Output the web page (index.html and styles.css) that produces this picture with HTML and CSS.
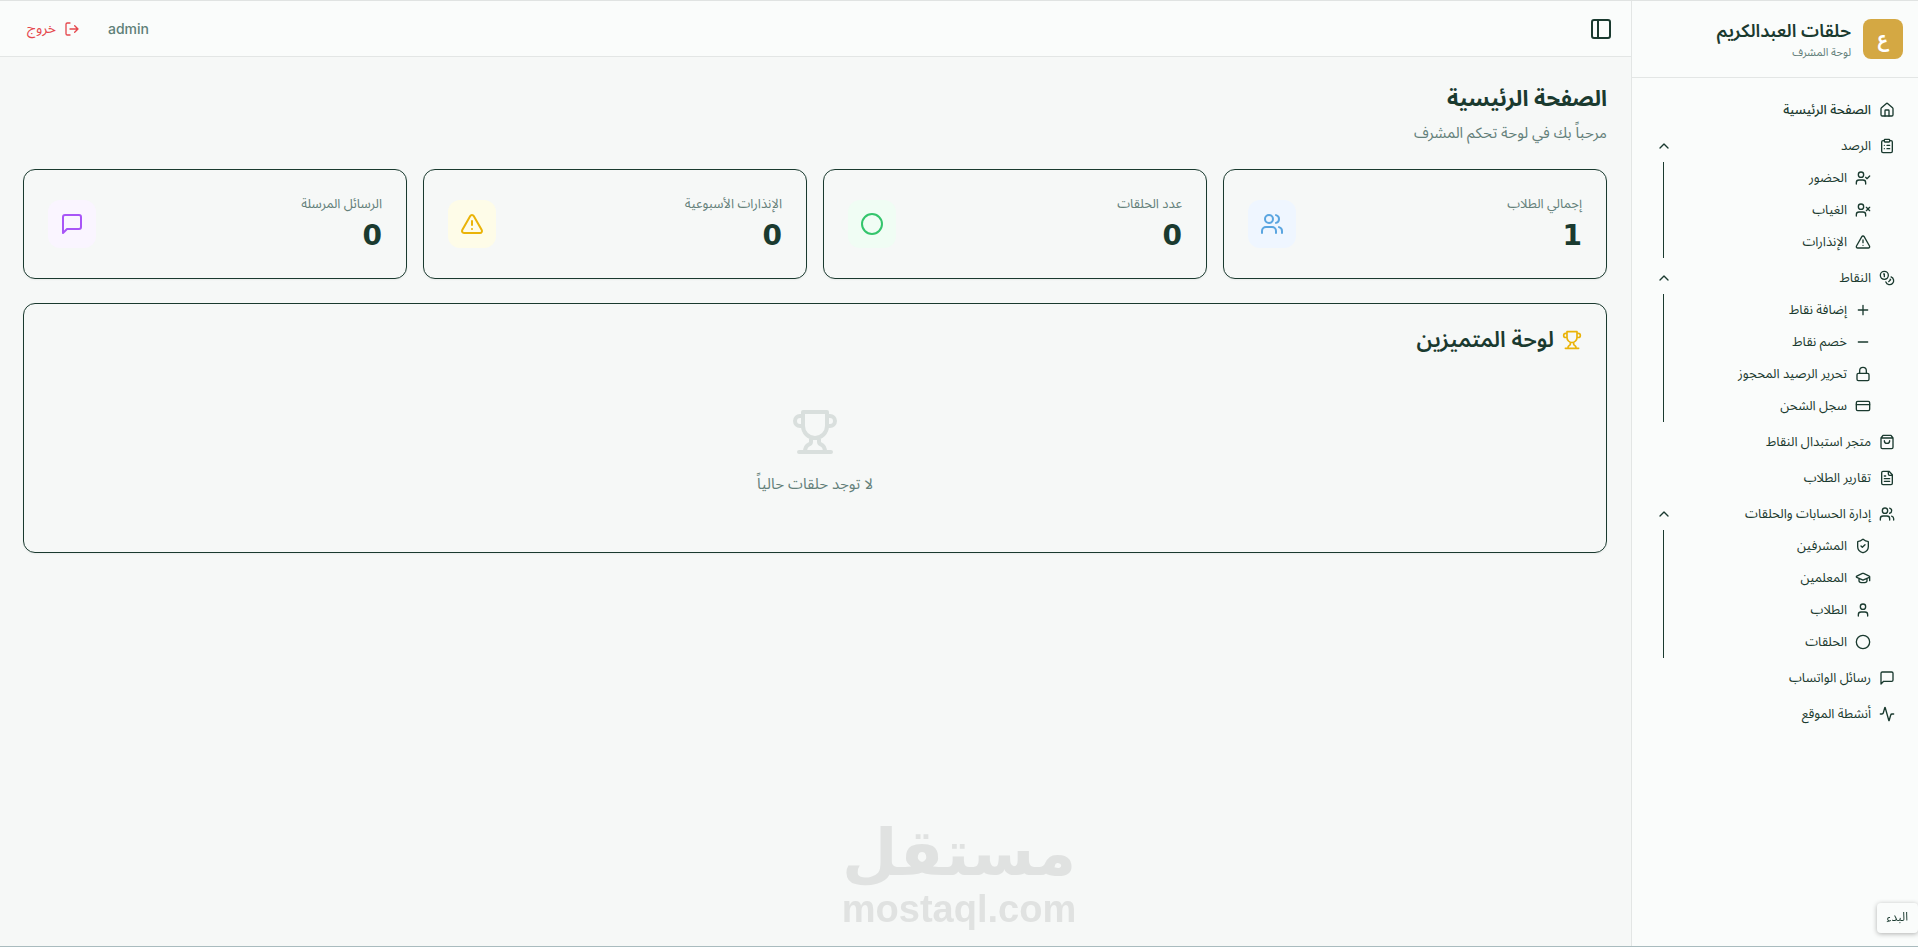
FILE: index.html
```html
<!DOCTYPE html>
<html lang="ar" dir="rtl">
<head>
    <meta charset="UTF-8">
    <meta name="viewport" content="width=device-width, initial-scale=1.0">
    <title>حلقات العبدالكريم</title>
    <link rel="stylesheet" href="styles.css">
</head>
<body>
    <!-- Иконки -->
    <svg class="sprite" aria-hidden="true">
        <symbol id="home" viewBox="0 0 24 24"><path d="M15 21v-8a1 1 0 0 0-1-1h-4a1 1 0 0 0-1 1v8"/><path d="M3 10a2 2 0 0 1 .709-1.528l7-5.999a2 2 0 0 1 2.582 0l7 5.999A2 2 0 0 1 21 10v9a2 2 0 0 1-2 2H5a2 2 0 0 1-2-2z"/></symbol>
        <symbol id="clipboard" viewBox="0 0 24 24"><rect width="8" height="4" x="8" y="2" rx="1"/><path d="M16 4h2a2 2 0 0 1 2 2v14a2 2 0 0 1-2 2H6a2 2 0 0 1-2-2V6a2 2 0 0 1 2-2h2M12 11h4M12 16h4M8 11h.01M8 16h.01"/></symbol>
        <symbol id="user-check" viewBox="0 0 24 24"><path d="m16 11 2 2 4-4M16 21v-2a4 4 0 0 0-4-4H6a4 4 0 0 0-4 4v2"/><circle cx="9" cy="7" r="4"/></symbol>
        <symbol id="user-x" viewBox="0 0 24 24"><path d="M16 21v-2a4 4 0 0 0-4-4H6a4 4 0 0 0-4 4v2M17 8l5 5M22 8l-5 5"/><circle cx="9" cy="7" r="4"/></symbol>
        <symbol id="alert" viewBox="0 0 24 24"><path d="m21.73 18-8-14a2 2 0 0 0-3.48 0l-8 14A2 2 0 0 0 4 21h16a2 2 0 0 0 1.73-3M12 9v4M12 17h.01"/></symbol>
        <symbol id="coins" viewBox="0 0 24 24"><circle cx="8" cy="8" r="6"/><path d="M18.09 10.37A6 6 0 1 1 10.34 18M7 6h1v4M16.71 13.88l.7.71-2.82 2.82"/></symbol>
        <symbol id="plus" viewBox="0 0 24 24"><path d="M5 12h14M12 5v14"/></symbol>
        <symbol id="minus" viewBox="0 0 24 24"><path d="M5 12h14"/></symbol>
        <symbol id="lock" viewBox="0 0 24 24"><rect width="18" height="11" x="3" y="11" rx="2"/><path d="M7 11V7a5 5 0 0 1 10 0v4"/></symbol>
        <symbol id="card" viewBox="0 0 24 24"><rect width="20" height="14" x="2" y="5" rx="2"/><path d="M2 10h20"/></symbol>
        <symbol id="bag" viewBox="0 0 24 24"><path d="M3 6 6 2h12l3 4v14a2 2 0 0 1-2 2H5a2 2 0 0 1-2-2zM3 6h18M16 10a4 4 0 0 1-8 0"/></symbol>
        <symbol id="file" viewBox="0 0 24 24"><path d="M15 2H6a2 2 0 0 0-2 2v16a2 2 0 0 0 2 2h12a2 2 0 0 0 2-2V7zM14 2v4a2 2 0 0 0 2 2h4M10 9H8M16 13H8M16 17H8"/></symbol>
        <symbol id="users" viewBox="0 0 24 24"><path d="M16 21v-2a4 4 0 0 0-4-4H6a4 4 0 0 0-4 4v2M22 21v-2a4 4 0 0 0-3-3.87M16 3.13a4 4 0 0 1 0 7.75"/><circle cx="9" cy="7" r="4"/></symbol>
        <symbol id="shield" viewBox="0 0 24 24"><path d="M20 13c0 5-3.5 7.500-7.660 8.950a1 1 0 0 1-.67-.01C7.500 20.500 4 18 4 13V6a1 1 0 0 1 1-1c2 0 4.500-1.200 6.240-2.720a1.170 1.170 0 0 1 1.520 0C14.510 3.810 17 5 19 5a1 1 0 0 1 1 1zM9 12l2 2 4-4"/></symbol>
        <symbol id="cap" viewBox="0 0 24 24"><path d="M21.42 10.922a1 1 0 0 0-.019-1.838L12.830 5.180a2 2 0 0 0-1.660 0L2.600 9.080a1 1 0 0 0 0 1.832l8.570 3.908a2 2 0 0 0 1.660 0zM22 10v6M6 12.500V16a6 3 0 0 0 12 0v-3.500"/></symbol>
        <symbol id="user" viewBox="0 0 24 24"><circle cx="12" cy="7" r="4"/><path d="M19 21v-2a4 4 0 0 0-4-4H9a4 4 0 0 0-4 4v2"/></symbol>
        <symbol id="circle" viewBox="0 0 24 24"><circle cx="12" cy="12" r="10"/></symbol>
        <symbol id="message" viewBox="0 0 24 24"><path d="M21 15a2 2 0 0 1-2 2H7l-4 4V5a2 2 0 0 1 2-2h14a2 2 0 0 1 2 2z"/></symbol>
        <symbol id="activity" viewBox="0 0 24 24"><path d="M22 12h-2.480a2 2 0 0 0-1.930 1.460l-2.350 8.360a.25.25 0 0 1-.48 0L9.240 2.180a.25.25 0 0 0-.48 0l-2.350 8.360A2 2 0 0 1 4.490 12H2"/></symbol>
        <symbol id="chevron" viewBox="0 0 24 24"><path d="m18 15-6-6-6 6"/></symbol>
        <symbol id="panel" viewBox="0 0 24 24"><rect width="18" height="18" x="3" y="3" rx="2"/><path d="M9 3v18"/></symbol>
        <symbol id="logout" viewBox="0 0 24 24"><path d="M9 21H5a2 2 0 0 1-2-2V5a2 2 0 0 1 2-2h4M16 17l5-5-5-5M21 12H9"/></symbol>
        <symbol id="trophy" viewBox="0 0 24 24"><path d="M6 9H4.500a2.500 2.500 0 0 1 0-5H6M18 9h1.500a2.500 2.500 0 0 0 0-5H18M4 22h16M10 14.660V17c0 .55-.47.98-.97 1.210C7.850 18.750 7 20.240 7 22M14 14.660V17c0 .55.47.98.97 1.210C16.150 18.750 17 20.240 17 22M18 2H6v7a6 6 0 0 0 12 0z"/></symbol>
    </svg>

    <div class="layout">
        <aside class="sidebar">
            <div class="brand">
                <div class="brand-logo">ع</div>
                <div class="brand-text">
                    <div class="brand-name">حلقات العبدالكريم</div>
                    <div class="brand-role">لوحة المشرف</div>
                </div>
            </div>
            <nav class="menu">
                <a class="menu-item active" href="#"><svg class="icon"><use href="#home"/></svg>الصفحة الرئيسية</a>
                <div class="menu-group">
                    <button class="menu-item" aria-expanded="true"><svg class="icon"><use href="#clipboard"/></svg>الرصد<svg class="icon chevron"><use href="#chevron"/></svg></button>
                    <div class="submenu">
                        <a class="menu-item" href="#"><svg class="icon"><use href="#user-check"/></svg>الحضور</a>
                        <a class="menu-item" href="#"><svg class="icon"><use href="#user-x"/></svg>الغياب</a>
                        <a class="menu-item" href="#"><svg class="icon"><use href="#alert"/></svg>الإنذارات</a>
                    </div>
                </div>
                <div class="menu-group">
                    <button class="menu-item" aria-expanded="true"><svg class="icon"><use href="#coins"/></svg>النقاط<svg class="icon chevron"><use href="#chevron"/></svg></button>
                    <div class="submenu">
                        <a class="menu-item" href="#"><svg class="icon"><use href="#plus"/></svg>إضافة نقاط</a>
                        <a class="menu-item" href="#"><svg class="icon"><use href="#minus"/></svg>خصم نقاط</a>
                        <a class="menu-item" href="#"><svg class="icon"><use href="#lock"/></svg>تحرير الرصيد المحجوز</a>
                        <a class="menu-item" href="#"><svg class="icon"><use href="#card"/></svg>سجل الشحن</a>
                    </div>
                </div>
                <a class="menu-item" href="#"><svg class="icon"><use href="#bag"/></svg>متجر استبدال النقاط</a>
                <a class="menu-item" href="#"><svg class="icon"><use href="#file"/></svg>تقارير الطلاب</a>
                <div class="menu-group">
                    <button class="menu-item" aria-expanded="true"><svg class="icon"><use href="#users"/></svg>إدارة الحسابات والحلقات<svg class="icon chevron"><use href="#chevron"/></svg></button>
                    <div class="submenu">
                        <a class="menu-item" href="#"><svg class="icon"><use href="#shield"/></svg>المشرفين</a>
                        <a class="menu-item" href="#"><svg class="icon"><use href="#cap"/></svg>المعلمين</a>
                        <a class="menu-item" href="#"><svg class="icon"><use href="#user"/></svg>الطلاب</a>
                        <a class="menu-item" href="#"><svg class="icon"><use href="#circle"/></svg>الحلقات</a>
                    </div>
                </div>
                <a class="menu-item" href="#"><svg class="icon"><use href="#message"/></svg>رسائل الواتساب</a>
                <a class="menu-item" href="#"><svg class="icon"><use href="#activity"/></svg>أنشطة الموقع</a>
            </nav>
        </aside>

        <div class="page">
            <header class="topbar">
                <button class="toggle" aria-label="القائمة"><svg class="icon icon-lg"><use href="#panel"/></svg></button>
                <div class="account">
                    <span class="user-name">admin</span>
                    <button class="logout"><svg class="icon"><use href="#logout"/></svg>خروج</button>
                </div>
            </header>

            <main class="content">
                <div class="heading">
                    <h1>الصفحة الرئيسية</h1>
                    <p>مرحباً بك في لوحة تحكم المشرف</p>
                </div>

                <div class="stats">
                    <div class="card stat">
                        <div>
                            <div class="stat-label">إجمالي الطلاب</div>
                            <div class="stat-value">1</div>
                        </div>
                        <div class="stat-icon blue"><svg class="icon icon-lg"><use href="#users"/></svg></div>
                    </div>
                    <div class="card stat">
                        <div>
                            <div class="stat-label">عدد الحلقات</div>
                            <div class="stat-value">0</div>
                        </div>
                        <div class="stat-icon green"><svg class="icon icon-lg"><use href="#circle"/></svg></div>
                    </div>
                    <div class="card stat">
                        <div>
                            <div class="stat-label">الإنذارات الأسبوعية</div>
                            <div class="stat-value">0</div>
                        </div>
                        <div class="stat-icon yellow"><svg class="icon icon-lg"><use href="#alert"/></svg></div>
                    </div>
                    <div class="card stat">
                        <div>
                            <div class="stat-label">الرسائل المرسلة</div>
                            <div class="stat-value">0</div>
                        </div>
                        <div class="stat-icon purple"><svg class="icon icon-lg"><use href="#message"/></svg></div>
                    </div>
                </div>

                <section class="card board">
                    <h2><svg class="icon icon-md"><use href="#trophy"/></svg>لوحة المتميزين</h2>
                    <div class="empty">
                        <svg class="icon icon-xl"><use href="#trophy"/></svg>
                        <p>لا توجد حلقات حالياً</p>
                    </div>
                </section>
            </main>
        </div>
    </div>

    <div class="watermark">
        <span class="watermark-ar">مستقل</span>
        <span class="watermark-en">mostaql.com</span>
    </div>
    <button class="start">البدء</button>
</body>
</html>
```
FILE: styles.css
```css
* {
    box-sizing: border-box;
}

body {
    margin: 0;
    background-color: #f6f8f7;
    color: #1a3a2f;
    font-family: 'Noto Sans Arabic', 'Noto Sans', 'DejaVu Sans', sans-serif;
    font-size: 13px;
    line-height: 20px;
}

h1, h2, p {
    margin: 0;
}

button {
    border: none;
    background: none;
    padding: 0;
    color: inherit;
    font: inherit;
    cursor: pointer;
}

a {
    color: inherit;
    text-decoration: none;
}

.sprite {
    display: none;
}

.icon {
    width: 16px;
    height: 16px;
    flex-shrink: 0;
    fill: none;
    stroke: currentColor;
    stroke-width: 2;
    stroke-linecap: round;
    stroke-linejoin: round;
}

.icon-md {
    width: 20px;
    height: 20px;
}

.icon-lg {
    width: 24px;
    height: 24px;
}

.icon-xl {
    width: 48px;
    height: 48px;
}

.layout {
    display: flex;
    min-height: 100vh;
    border-top: 1px solid #e0e3e2;
    border-bottom: 1px solid #a9bbbe;
}

/* Sidebar */
.sidebar {
    width: 287px;
    flex-shrink: 0;
    background-color: #fafcfb;
    border-left: 1px solid #e3e6e5;
}

.brand {
    display: flex;
    align-items: center;
    gap: 12px;
    padding: 16px 15px;
    border-bottom: 1px solid #e3e6e5;
}

.brand-logo {
    width: 40px;
    height: 40px;
    border-radius: 8px;
    background-color: #d4a843;
    color: #ffffff;
    font-size: 18px;
    font-weight: 700;
    line-height: 40px;
    text-align: center;
}

.brand-name {
    font-size: 18px;
    font-weight: 600;
    line-height: 28px;
}

.brand-role {
    color: #64807a;
    font-size: 11px;
    line-height: 16px;
}

.menu {
    display: flex;
    flex-direction: column;
    gap: 4px;
    padding: 16px 15px 16px 16px;
}

.menu-item {
    display: flex;
    align-items: center;
    gap: 8px;
    width: 100%;
    height: 32px;
    padding: 0 8px;
    white-space: nowrap;
}

.menu-item.active {
    font-weight: 500;
}

.chevron {
    margin-right: auto;
}

.submenu {
    margin: 0 24px 0 15px;
    border-left: 1px solid #1a3a2f;
}

/* Topbar */
.page {
    flex: 1;
    min-width: 0;
}

.topbar {
    display: flex;
    align-items: center;
    justify-content: space-between;
    height: 56px;
    padding: 0 18px 0 15px;
    background-color: #fafcfb;
    border-bottom: 1px solid #e3e6e5;
}

.toggle {
    display: flex;
}

.account {
    display: flex;
    align-items: center;
    gap: 16px;
}

.user-name {
    color: #5f8078;
    font-family: Inter, sans-serif;
    font-size: 14px;
    font-weight: 500;
}

.logout {
    display: flex;
    align-items: center;
    gap: 8px;
    padding: 8px 12px;
    color: #e5484d;
    font-size: 14px;
}

/* Content */
.content {
    display: flex;
    flex-direction: column;
    gap: 24px;
    padding: 24px 24px 24px 23px;
}

.heading {
    display: flex;
    flex-direction: column;
    gap: 4px;
}

.heading h1 {
    font-size: 22px;
    font-weight: 700;
    line-height: 36px;
}

.heading p {
    color: #64807a;
    font-size: 15px;
    line-height: 24px;
}

.stats {
    display: grid;
    grid-template-columns: repeat(4, 1fr);
    gap: 16px;
}

.card {
    border: 1px solid #1a3a2f;
    border-radius: 12px;
    padding: 24px;
    box-shadow: 0 1px 2px rgba(0, 0, 0, 0.05);
}

.stat {
    display: flex;
    align-items: center;
    justify-content: space-between;
}

.stat-label {
    color: #64807a;
}

.stat-value {
    margin-top: 4px;
    font-family: 'DejaVu Sans', sans-serif;
    font-size: 28px;
    font-weight: 700;
    line-height: 36px;
}

.stat-icon {
    padding: 12px;
    border-radius: 12px;
    line-height: 0;
}

.blue {
    color: #5aa5e0;
    background-color: #eff6ff;
}

.green {
    color: #34c56c;
    background-color: #f0fdf4;
}

.yellow {
    color: #eab308;
    background-color: #fefce8;
}

.purple {
    color: #a855f7;
    background-color: #faf5ff;
}

.board h2 {
    display: flex;
    align-items: center;
    gap: 8px;
    font-size: 22px;
    font-weight: 600;
    line-height: 24px;
}

.board h2 .icon {
    color: #eab308;
}

.empty {
    display: flex;
    flex-direction: column;
    align-items: center;
    gap: 16px;
    padding: 56px 0 32px;
    color: #64807a;
    font-size: 15px;
    line-height: 24px;
}

.empty .icon {
    color: #d9dfdd;
}

/* Overlays */
.watermark {
    position: fixed;
    right: 0;
    bottom: 18px;
    left: 0;
    display: flex;
    flex-direction: column;
    align-items: center;
    color: #e0e2e1;
    font-weight: 700;
    pointer-events: none;
}

.watermark-ar {
    font-family: 'DejaVu Sans', sans-serif;
    font-size: 64px;
    line-height: 72px;
}

.watermark-en {
    font-family: 'Liberation Sans', Arial, sans-serif;
    font-size: 38px;
    line-height: 40px;
}

.start {
    position: fixed;
    right: 0;
    bottom: 14px;
    padding: 7px 10px;
    border-radius: 4px;
    background-color: #fafcfb;
    box-shadow: 0 1px 5px rgba(0, 0, 0, 0.3);
    font-size: 12px;
    line-height: 16px;
}
```
